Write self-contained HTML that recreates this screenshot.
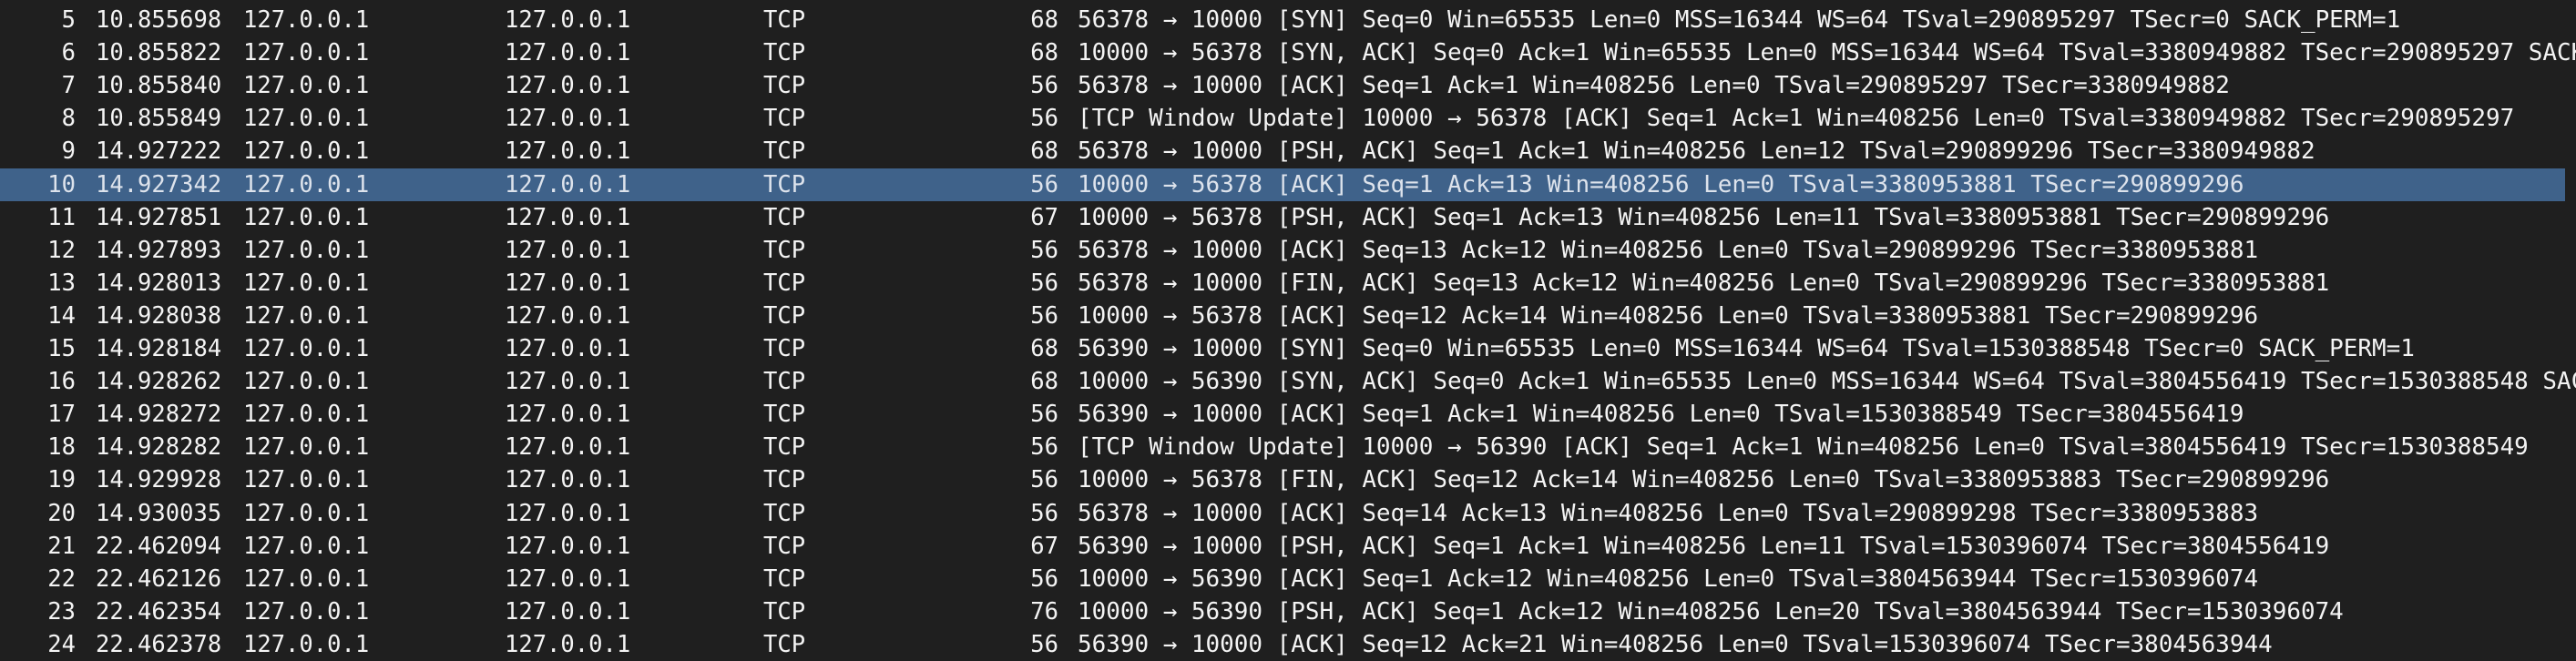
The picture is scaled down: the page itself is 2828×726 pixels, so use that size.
<!DOCTYPE html>
<html><head><meta charset="utf-8"><style>
html,body{margin:0;padding:0;background:#1f1f1f;width:2828px;height:722px;overflow:hidden}
.r{position:absolute;left:0;width:2828px;height:36.1px;font-family:"DejaVu Sans Mono","Liberation Mono",monospace;font-size:25.5px;line-height:36.1px;color:#f4f4f4;white-space:pre}
.r span{position:absolute;top:0}
.hl{position:absolute;left:0;top:185px;width:2816px;height:36px;background:#3f628a}
.sel{color:#dde3ec}
.n{right:2745px;text-align:right}
.t{left:105px}.s{left:267px}.d{left:554px}.p{left:838px}
.l{right:1666px;text-align:right}.r .i{left:1183px;font-size:25.95px}
</style></head><body>
<div class="hl"></div>
<div class="r" style="top:4px"><span class="n">5</span><span class="t">10.855698</span><span class="s">127.0.0.1</span><span class="d">127.0.0.1</span><span class="p">TCP</span><span class="l">68</span><span class="i">56378 → 10000 [SYN] Seq=0 Win=65535 Len=0 MSS=16344 WS=64 TSval=290895297 TSecr=0 SACK_PERM=1</span></div>
<div class="r" style="top:40.1px"><span class="n">6</span><span class="t">10.855822</span><span class="s">127.0.0.1</span><span class="d">127.0.0.1</span><span class="p">TCP</span><span class="l">68</span><span class="i">10000 → 56378 [SYN, ACK] Seq=0 Ack=1 Win=65535 Len=0 MSS=16344 WS=64 TSval=3380949882 TSecr=290895297 SACK_PERM=1</span></div>
<div class="r" style="top:76.2px"><span class="n">7</span><span class="t">10.855840</span><span class="s">127.0.0.1</span><span class="d">127.0.0.1</span><span class="p">TCP</span><span class="l">56</span><span class="i">56378 → 10000 [ACK] Seq=1 Ack=1 Win=408256 Len=0 TSval=290895297 TSecr=3380949882</span></div>
<div class="r" style="top:112.3px"><span class="n">8</span><span class="t">10.855849</span><span class="s">127.0.0.1</span><span class="d">127.0.0.1</span><span class="p">TCP</span><span class="l">56</span><span class="i">[TCP Window Update] 10000 → 56378 [ACK] Seq=1 Ack=1 Win=408256 Len=0 TSval=3380949882 TSecr=290895297</span></div>
<div class="r" style="top:148.4px"><span class="n">9</span><span class="t">14.927222</span><span class="s">127.0.0.1</span><span class="d">127.0.0.1</span><span class="p">TCP</span><span class="l">68</span><span class="i">56378 → 10000 [PSH, ACK] Seq=1 Ack=1 Win=408256 Len=12 TSval=290899296 TSecr=3380949882</span></div>
<div class="r sel" style="top:184.5px"><span class="n">10</span><span class="t">14.927342</span><span class="s">127.0.0.1</span><span class="d">127.0.0.1</span><span class="p">TCP</span><span class="l">56</span><span class="i">10000 → 56378 [ACK] Seq=1 Ack=13 Win=408256 Len=0 TSval=3380953881 TSecr=290899296</span></div>
<div class="r" style="top:220.6px"><span class="n">11</span><span class="t">14.927851</span><span class="s">127.0.0.1</span><span class="d">127.0.0.1</span><span class="p">TCP</span><span class="l">67</span><span class="i">10000 → 56378 [PSH, ACK] Seq=1 Ack=13 Win=408256 Len=11 TSval=3380953881 TSecr=290899296</span></div>
<div class="r" style="top:256.7px"><span class="n">12</span><span class="t">14.927893</span><span class="s">127.0.0.1</span><span class="d">127.0.0.1</span><span class="p">TCP</span><span class="l">56</span><span class="i">56378 → 10000 [ACK] Seq=13 Ack=12 Win=408256 Len=0 TSval=290899296 TSecr=3380953881</span></div>
<div class="r" style="top:292.8px"><span class="n">13</span><span class="t">14.928013</span><span class="s">127.0.0.1</span><span class="d">127.0.0.1</span><span class="p">TCP</span><span class="l">56</span><span class="i">56378 → 10000 [FIN, ACK] Seq=13 Ack=12 Win=408256 Len=0 TSval=290899296 TSecr=3380953881</span></div>
<div class="r" style="top:328.9px"><span class="n">14</span><span class="t">14.928038</span><span class="s">127.0.0.1</span><span class="d">127.0.0.1</span><span class="p">TCP</span><span class="l">56</span><span class="i">10000 → 56378 [ACK] Seq=12 Ack=14 Win=408256 Len=0 TSval=3380953881 TSecr=290899296</span></div>
<div class="r" style="top:365px"><span class="n">15</span><span class="t">14.928184</span><span class="s">127.0.0.1</span><span class="d">127.0.0.1</span><span class="p">TCP</span><span class="l">68</span><span class="i">56390 → 10000 [SYN] Seq=0 Win=65535 Len=0 MSS=16344 WS=64 TSval=1530388548 TSecr=0 SACK_PERM=1</span></div>
<div class="r" style="top:401.1px"><span class="n">16</span><span class="t">14.928262</span><span class="s">127.0.0.1</span><span class="d">127.0.0.1</span><span class="p">TCP</span><span class="l">68</span><span class="i">10000 → 56390 [SYN, ACK] Seq=0 Ack=1 Win=65535 Len=0 MSS=16344 WS=64 TSval=3804556419 TSecr=1530388548 SACK_PERM=1</span></div>
<div class="r" style="top:437.2px"><span class="n">17</span><span class="t">14.928272</span><span class="s">127.0.0.1</span><span class="d">127.0.0.1</span><span class="p">TCP</span><span class="l">56</span><span class="i">56390 → 10000 [ACK] Seq=1 Ack=1 Win=408256 Len=0 TSval=1530388549 TSecr=3804556419</span></div>
<div class="r" style="top:473.3px"><span class="n">18</span><span class="t">14.928282</span><span class="s">127.0.0.1</span><span class="d">127.0.0.1</span><span class="p">TCP</span><span class="l">56</span><span class="i">[TCP Window Update] 10000 → 56390 [ACK] Seq=1 Ack=1 Win=408256 Len=0 TSval=3804556419 TSecr=1530388549</span></div>
<div class="r" style="top:509.4px"><span class="n">19</span><span class="t">14.929928</span><span class="s">127.0.0.1</span><span class="d">127.0.0.1</span><span class="p">TCP</span><span class="l">56</span><span class="i">10000 → 56378 [FIN, ACK] Seq=12 Ack=14 Win=408256 Len=0 TSval=3380953883 TSecr=290899296</span></div>
<div class="r" style="top:545.5px"><span class="n">20</span><span class="t">14.930035</span><span class="s">127.0.0.1</span><span class="d">127.0.0.1</span><span class="p">TCP</span><span class="l">56</span><span class="i">56378 → 10000 [ACK] Seq=14 Ack=13 Win=408256 Len=0 TSval=290899298 TSecr=3380953883</span></div>
<div class="r" style="top:581.6px"><span class="n">21</span><span class="t">22.462094</span><span class="s">127.0.0.1</span><span class="d">127.0.0.1</span><span class="p">TCP</span><span class="l">67</span><span class="i">56390 → 10000 [PSH, ACK] Seq=1 Ack=1 Win=408256 Len=11 TSval=1530396074 TSecr=3804556419</span></div>
<div class="r" style="top:617.7px"><span class="n">22</span><span class="t">22.462126</span><span class="s">127.0.0.1</span><span class="d">127.0.0.1</span><span class="p">TCP</span><span class="l">56</span><span class="i">10000 → 56390 [ACK] Seq=1 Ack=12 Win=408256 Len=0 TSval=3804563944 TSecr=1530396074</span></div>
<div class="r" style="top:653.8px"><span class="n">23</span><span class="t">22.462354</span><span class="s">127.0.0.1</span><span class="d">127.0.0.1</span><span class="p">TCP</span><span class="l">76</span><span class="i">10000 → 56390 [PSH, ACK] Seq=1 Ack=12 Win=408256 Len=20 TSval=3804563944 TSecr=1530396074</span></div>
<div class="r" style="top:689.9px"><span class="n">24</span><span class="t">22.462378</span><span class="s">127.0.0.1</span><span class="d">127.0.0.1</span><span class="p">TCP</span><span class="l">56</span><span class="i">56390 → 10000 [ACK] Seq=12 Ack=21 Win=408256 Len=0 TSval=1530396074 TSecr=3804563944</span></div>
</body></html>
